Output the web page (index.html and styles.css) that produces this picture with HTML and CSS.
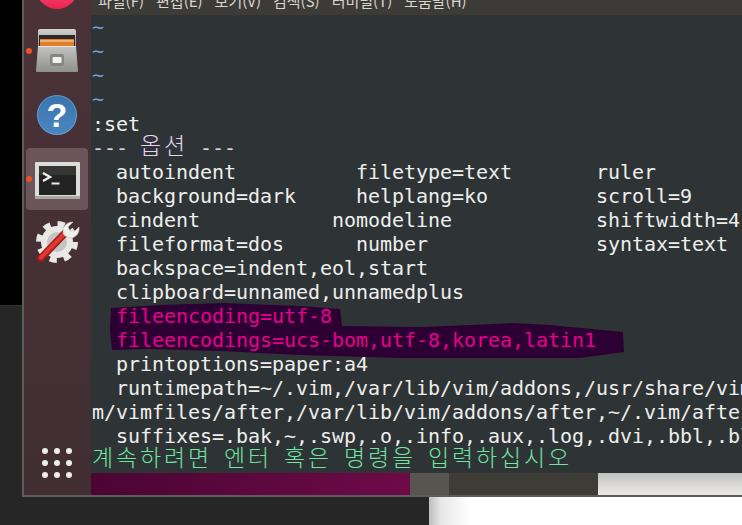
FILE: index.html
```html
<!DOCTYPE html>
<html lang="ko">
<head>
<meta charset="utf-8">
<title>vim :set</title>
<link rel="stylesheet" href="styles.css">
</head>
<body>
<div class="back-dark"></div>
<div class="back-white"></div>
<div class="window">
  <nav class="dock">
    <div class="dock-item first">
      <svg class="icon" width="48" height="48" viewBox="0 0 48 48">
        <defs><linearGradient id="pink" x1="0" y1="0" x2="0" y2="1"><stop offset="0.6" stop-color="#ff3f70"/><stop offset="1" stop-color="#e8244f"/></linearGradient></defs>
        <circle cx="24" cy="25" r="21" fill="url(#pink)"/>
      </svg>
    </div>
    <div class="dock-item running">
      <svg class="icon" width="48" height="48" viewBox="0 0 48 48">
        <defs>
          <linearGradient id="lid" x1="0" y1="0" x2="0" y2="1"><stop offset="0" stop-color="#d2d2d0"/><stop offset="1" stop-color="#8e8e8c"/></linearGradient>
          <linearGradient id="front" x1="0" y1="0" x2="0" y2="1"><stop offset="0" stop-color="#c4c4c2"/><stop offset="1" stop-color="#8f8f8d"/></linearGradient>
        </defs>
        <path d="M5 4q0-2 2-2h34q2 0 2 2v16H5z" fill="url(#lid)"/>
        <rect x="6" y="8" width="36" height="11" fill="#2b2a28"/>
        <rect x="7" y="12" width="34" height="7" fill="#e07f2a"/>
        <rect x="7" y="13.500" width="34" height="1" fill="#fbe3c0"/>
        <path d="M5 19h38l2 25q0 1-1 1H4q-1 0-1-1z" fill="url(#front)"/>
        <rect x="5" y="19" width="38" height="1" fill="#e4e4e2"/>
        <rect x="17" y="27" width="14" height="12" rx="2" fill="#858583"/>
        <rect x="19.500" y="30" width="9" height="6" rx="1" fill="#f0f0ee"/>
      </svg>
    </div>
    <div class="dock-item">
      <svg class="icon" width="48" height="48" viewBox="0 0 48 48">
        <defs><linearGradient id="blue" x1="0" y1="0" x2="0" y2="1"><stop offset="0" stop-color="#3a74ae"/><stop offset="1" stop-color="#4a86bf"/></linearGradient></defs>
        <circle cx="24" cy="24" r="20" fill="url(#blue)"/>
        <circle cx="24" cy="24" r="19.500" fill="none" stroke="#8ab4d8" stroke-opacity=".5"/>
        <text class="help-mark" x="24" y="36" text-anchor="middle">?</text>
      </svg>
    </div>
    <div class="dock-item running active">
      <svg class="icon" width="48" height="48" viewBox="0 0 48 48">
        <rect x="2" y="7" width="45" height="37" rx="1" fill="#dcdcda"/>
        <rect x="2" y="41" width="45" height="3" fill="#a8a8a6"/>
        <rect x="6" y="11" width="37" height="29" fill="#232323"/>
        <rect x="6" y="11" width="37" height="9" fill="#353535"/>
        <path d="M10 18l7 4-7 4" fill="none" stroke="#eee" stroke-width="2.400"/>
        <rect x="18.500" y="27.500" width="8" height="2" fill="#eee"/>
      </svg>
    </div>
    <div class="dock-item">
      <svg class="icon" width="48" height="48" viewBox="0 0 48 48">
        <circle cx="24" cy="23" r="18" fill="none" stroke="#e8e8e6" stroke-width="6" stroke-dasharray="7 7.140"/>
        <circle cx="24" cy="23" r="16" fill="#e8e8e6"/>
        <circle cx="24" cy="23" r="10" fill="#c4c4c2"/>
        <path d="M8 39L33 13" stroke="#a81b17" stroke-width="7.500" stroke-linecap="round"/>
        <path d="M8 38.500L33 13" stroke="#dc3a32" stroke-width="4" stroke-linecap="round"/>
        <path d="M31 16c-3-6 1-13 9-13l-5 5 2 4 5 0 4-4c1 8-6 13-12 10z" fill="#f0f0ee" stroke="#c4c4c2" stroke-width=".7"/>
      </svg>
    </div>
    <div class="dock-apps">
      <svg width="36" height="36" viewBox="0 0 36 36" fill="#eeeeee">
        <circle cx="6" cy="6" r="3"/><circle cx="18" cy="6" r="3"/><circle cx="30" cy="6" r="3"/>
        <circle cx="6" cy="18" r="3"/><circle cx="18" cy="18" r="3"/><circle cx="30" cy="18" r="3"/>
        <circle cx="6" cy="30" r="3"/><circle cx="18" cy="30" r="3"/><circle cx="30" cy="30" r="3"/>
      </svg>
    </div>
  </nav>
  <main class="main">
    <div class="menu">
      <span>파일(F)</span><span>편집(E)</span><span>보기(V)</span><span>검색(S)</span><span>터미널(T)</span><span>도움말(H)</span>
    </div>
    <div class="terminal">
      <svg class="scribble" viewBox="91 15 651 458" width="651" height="458">
        <path d="M111 308L160 305L225 303L300 306L340 309L342 326L420 327L470 325L513 323L550 325L623 332L624 352L580 358L500 358L400 358L300 355L220 351L150 349L112 350L110 330Z" fill="#2d0033"/>
      </svg>
<pre class="screen"><span class="tilde">~</span>
<span class="tilde">~</span>
<span class="tilde">~</span>
<span class="tilde">~</span>
:set
<span class="title">--- <span class="ko">옵션</span> ---</span>
  autoindent          filetype=text       ruler
  background=dark     helplang=ko         scroll=9
  cindent           nomodeline            shiftwidth=4
  fileformat=dos      number              syntax=text
  backspace=indent,eol,start
  clipboard=unnamed,unnamedplus
  <span class="mark">fileencoding=utf-8</span>
  <span class="mark">fileencodings=ucs-bom,utf-8,korea,latin1</span>
  printoptions=paper:a4
  runtimepath=~/.vim,/var/lib/vim/addons,/usr/share/vim/vimfiles,/usr/share/vi
m/vimfiles/after,/var/lib/vim/addons/after,~/.vim/after
  suffixes=.bak,~,.swp,.o,.info,.aux,.log,.dvi,.bbl,.blg,.brf
<span class="prompt"><span class="ko">계속하려면</span> <span class="ko">엔터</span> <span class="ko">혹은</span> <span class="ko">명령을</span> <span class="ko">입력하십시오</span></span></pre>
    </div>
    <div class="strip">
      <div class="strip-purple"></div>
      <div class="strip-grey"></div>
      <div class="strip-dark"></div>
      <div class="strip-light"></div>
    </div>
  </main>
</div>
</body>
</html>
```
FILE: styles.css
```css
html, body {
  margin: 0;
  height: 100%;
  overflow: hidden;
  background: #000;
}
body { position: relative; }

.back-dark {
  position: absolute;
  left: 0;
  top: 305px;
  width: 429px;
  bottom: 0;
  background: #262626;
  border-top: 1px solid #333;
}
.back-white {
  position: absolute;
  left: 429px;
  right: 0;
  top: 497px;
  bottom: 0;
  background: linear-gradient(90deg, #bdbdbd 0, #e8e8e8 12px, #fff 42px);
}

.window {
  position: absolute;
  left: 22px;
  top: 0;
  width: 720px;
  height: 495px;
  display: flex;
  border-left: 2px solid #5c5c5c;
  border-bottom: 2px solid #5c5c5c;
}

.dock {
  width: 67px;
  flex: none;
  box-sizing: border-box;
  padding-left: 2px;
  display: flex;
  flex-direction: column;
  align-items: flex-start;
  gap: 2px;
  overflow: hidden;
  background: linear-gradient(#4a3238, #402e33);
}
.dock-item {
  position: relative;
  width: 62px;
  height: 62px;
  flex: none;
  display: flex;
  align-items: center;
  justify-content: center;
  border-radius: 4px;
}
.dock-item.first { margin-top: -44px; }
.dock-item.active { background: #6b555a; }
.dock-item.running::before {
  content: "";
  position: absolute;
  left: 0;
  top: 50%;
  width: 6px;
  height: 6px;
  margin-top: -3px;
  border-radius: 50%;
  background: #e95420;
}
.icon { display: block; }
.help-mark {
  font-family: "Liberation Sans", sans-serif;
  font-weight: 700;
  font-size: 34px;
  fill: #fff;
}
.dock-apps {
  margin-top: auto;
  margin-left: 13px;
  padding-bottom: 14px;
  display: flex;
}

.main {
  flex: 1;
  min-width: 0;
  display: flex;
  flex-direction: column;
  overflow: hidden;
}

.menu {
  height: 15px;
  flex: none;
  display: flex;
  align-items: flex-end;
  gap: 12px;
  padding: 0 0 4px 7px;
  box-sizing: border-box;
  overflow: hidden;
  background: #3c3b37;
  color: #d8d6d0;
  font: 15px/20px "Noto Sans CJK KR", "Noto Sans", sans-serif;
  white-space: nowrap;
}

.terminal {
  position: relative;
  height: 458px;
  flex: none;
  overflow: hidden;
  background: #2e3436;
}
.scribble {
  position: absolute;
  left: 0;
  top: 0;
}
.screen {
  position: relative;
  margin: 0;
  padding: 1px 0 0 1px;
  font: 20px/24px "DejaVu Sans Mono", monospace;
  letter-spacing: -0.04px;
  color: #eeeeec;
  white-space: pre;
}
.ko {
  font-family: "Noto Sans CJK KR", sans-serif;
  font-size: 23px;
  font-weight: 300;
  line-height: 0;
  letter-spacing: 2.84px;
  vertical-align: 1px;
}
.tilde {
  color: #6ea5dc;
  line-height: 0;
  vertical-align: 1px;
}
.title { color: #e9d3f2; }
.mark { color: #e6008e; }
.prompt { color: #70e4a0; }

.strip {
  height: 22px;
  flex: none;
  display: flex;
}
.strip-purple {
  width: 319px;
  background: linear-gradient(100deg, #4a0533, #6e0a48);
}
.strip-grey { width: 39px; background: #56554f; }
.strip-dark { width: 149px; background: #3d3c37; }
.strip-light {
  flex: 1;
  background: linear-gradient(#c2c2c0, #ecebe9);
}
```
